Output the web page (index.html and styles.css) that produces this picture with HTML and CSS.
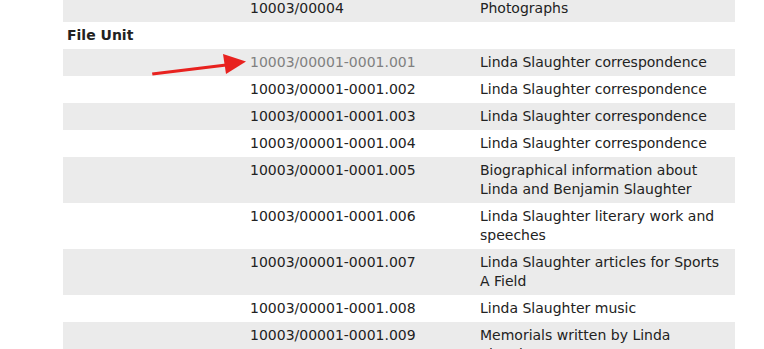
FILE: index.html
```html
<!DOCTYPE html>
<html>
<head>
<meta charset="utf-8">
<link rel="stylesheet" href="styles.css">
</head>
<body>
<div class="page">
  <table class="units">
    <tr class="alt"><td class="c1"></td><td class="c2">10003/00004</td><td class="c3">Photographs</td></tr>
    <tr class="head"><td class="c1" colspan="3">File Unit</td></tr>
    <tr class="alt"><td class="c1"></td><td class="c2 visited">10003/00001-0001.001</td><td class="c3">Linda Slaughter correspondence</td></tr>
    <tr><td class="c1"></td><td class="c2">10003/00001-0001.002</td><td class="c3">Linda Slaughter correspondence</td></tr>
    <tr class="alt"><td class="c1"></td><td class="c2">10003/00001-0001.003</td><td class="c3">Linda Slaughter correspondence</td></tr>
    <tr><td class="c1"></td><td class="c2">10003/00001-0001.004</td><td class="c3">Linda Slaughter correspondence</td></tr>
    <tr class="alt"><td class="c1"></td><td class="c2">10003/00001-0001.005</td><td class="c3">Biographical information about Linda and Benjamin Slaughter</td></tr>
    <tr><td class="c1"></td><td class="c2">10003/00001-0001.006</td><td class="c3">Linda Slaughter literary work and speeches</td></tr>
    <tr class="alt"><td class="c1"></td><td class="c2">10003/00001-0001.007</td><td class="c3">Linda Slaughter articles for Sports A Field</td></tr>
    <tr><td class="c1"></td><td class="c2">10003/00001-0001.008</td><td class="c3">Linda Slaughter music</td></tr>
    <tr class="alt"><td class="c1"></td><td class="c2">10003/00001-0001.009</td><td class="c3">Memorials written by Linda Slaughter</td></tr>
  </table>
  <svg class="arrow" width="100" height="30" viewBox="0 0 100 30">
    <polygon points="2,20.5 76,11.5 76.5,14.5 2.5,23.5" fill="#e8221f"/>
    <polygon points="73,2 96,9.5 76,22" fill="#e8221f"/>
  </svg>
</div>
</body>
</html>
```
FILE: styles.css
```css
html, body {
  margin: 0;
  padding: 0;
  background: #ffffff;
  overflow: hidden;
}
.page {
  position: relative;
  margin-top: -5px;
  padding-left: 63px;
  width: 672px;
  font-family: Tahoma, "DejaVu Sans", sans-serif;
  font-size: 14px;
  color: #222;
}
.units {
  width: 672px;
  border-collapse: collapse;
  table-layout: fixed;
}
.units td {
  padding: 4px 0 4px 0;
  line-height: 19px;
  vertical-align: top;
}
.units td.c3 {
  padding-right: 8px;
}
.units tr.alt td {
  background: #ebebeb;
}
.c1 { width: 187px; }
.c2 { width: 230px; }
.units tr.head td {
  font-weight: bold;
  padding-left: 4px;
}
.visited { color: #808080; }
.arrow {
  position: absolute;
  left: 150px;
  top: 57px;
}
```
